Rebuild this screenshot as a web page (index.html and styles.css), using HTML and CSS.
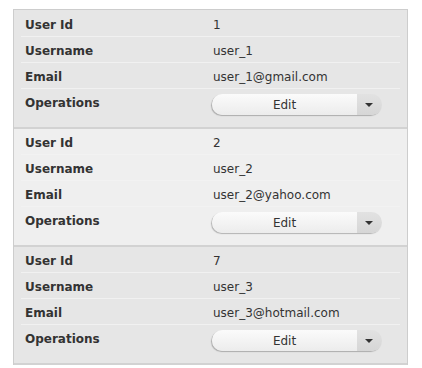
FILE: index.html
```html
<!DOCTYPE html>
<html lang="en">
<head>
  <meta charset="UTF-8">
  <title>Users</title>
  <link rel="stylesheet" href="styles.css">
</head>
<body>
  <div class="user-list">
    <div class="user-item">
      <div class="row"><span class="label">User Id</span><span class="value">1</span></div>
      <div class="row"><span class="label">Username</span><span class="value">user_1</span></div>
      <div class="row"><span class="label">Email</span><span class="value">user_1@gmail.com</span></div>
      <div class="row ops">
        <span class="label">Operations</span>
        <div class="split-btn"><button class="main">Edit</button><button class="drop"><span class="caret"></span></button></div>
      </div>
    </div>
    <div class="user-item alt">
      <div class="row"><span class="label">User Id</span><span class="value">2</span></div>
      <div class="row"><span class="label">Username</span><span class="value">user_2</span></div>
      <div class="row"><span class="label">Email</span><span class="value">user_2@yahoo.com</span></div>
      <div class="row ops">
        <span class="label">Operations</span>
        <div class="split-btn"><button class="main">Edit</button><button class="drop"><span class="caret"></span></button></div>
      </div>
    </div>
    <div class="user-item">
      <div class="row"><span class="label">User Id</span><span class="value">7</span></div>
      <div class="row"><span class="label">Username</span><span class="value">user_3</span></div>
      <div class="row"><span class="label">Email</span><span class="value">user_3@hotmail.com</span></div>
      <div class="row ops">
        <span class="label">Operations</span>
        <div class="split-btn"><button class="main">Edit</button><button class="drop"><span class="caret"></span></button></div>
      </div>
    </div>
  </div>
</body>
</html>
```

FILE: styles.css
```css
body {
  margin: 0;
  font-family: 'DejaVu Sans', Verdana, sans-serif;
  font-size: 12px;
  color: #333;
  background: #fff;
}

.user-list {
  width: 393px;
  margin: 9px 0 0 13px;
  padding-top: 1px;
  background: #e6e6e6;
  border: 1px solid #cdcdcd;
  border-bottom: none;
}

.user-item {
  background: #e6e6e6;
  padding: 0 7px;
  border-bottom: 2px solid #d2d2d2;
}

.user-item.alt {
  background: #efefef;
}

.row {
  display: grid;
  grid-template-columns: 188px 1fr;
  align-items: start;
  line-height: 15px;
  padding: 7px 0 0 4px;
  box-sizing: border-box;
  height: 26px;
  border-bottom: 1px solid #f1f1f1;
}

.user-item.alt .row {
  border-bottom-color: #f2f2f2;
}

.row.ops {
  height: 38px;
  padding-top: 5px;
  border-bottom: none;
}

.row.ops .label {
  padding-top: 2px;
}

.label {
  font-weight: bold;
}

.split-btn {
  display: flex;
  width: 170px;
  height: 21px;
  margin-left: -1px;
  border-radius: 11px;
  box-shadow: -1px 1px 1px rgba(0, 0, 0, 0.25);
  overflow: hidden;
}

.split-btn button {
  border: none;
  margin: 0;
  padding: 0;
  font-family: inherit;
  font-size: 12px;
  color: #333;
  cursor: pointer;
}

.split-btn .main {
  flex: 1;
  background: linear-gradient(#fbfbfb, #ececec);
}

.split-btn .drop {
  width: 25px;
  background: linear-gradient(#e2e2e2, #d6d6d6);
  display: flex;
  align-items: center;
  justify-content: center;
}

.caret {
  width: 0;
  height: 0;
  border-left: 4px solid transparent;
  border-right: 4px solid transparent;
  border-top: 4px solid #333;
  margin-left: -2px;
}
```
